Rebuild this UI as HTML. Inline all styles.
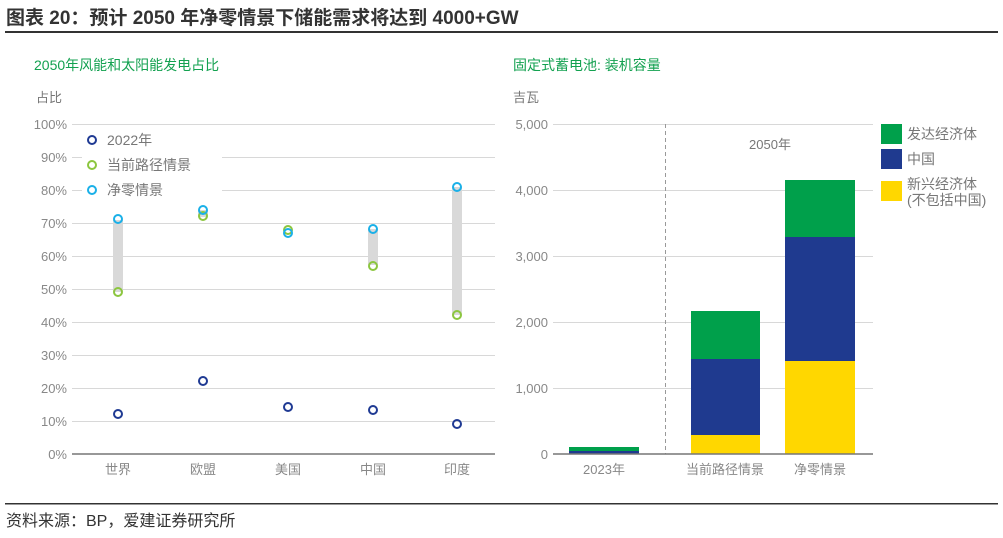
<!DOCTYPE html>
<html><head><meta charset="utf-8"><style>
body{margin:0;background:#fff;width:1003px;height:533px;overflow:hidden;font-family:"Liberation Sans","Noto Sans CJK SC",sans-serif}
</style></head><body>
<svg width="1003" height="533" viewBox="0 0 1003 533" xmlns="http://www.w3.org/2000/svg" font-family="Liberation Sans, Noto Sans CJK SC, sans-serif">
<text x="6" y="24" font-size="19" font-weight="bold" fill="#333">图表 20：预计 2050 年净零情景下储能需求将达到 4000+GW</text>
<rect x="5" y="31" width="993" height="2" fill="#333"/>
<text x="34" y="70" font-size="14" fill="#13a150">2050年风能和太阳能发电占比</text>
<text x="36" y="102" font-size="13" fill="#777">占比</text>
<g stroke="#d8d8d8" stroke-width="1">
<line x1="72" y1="124.5" x2="495" y2="124.5"/><line x1="72" y1="157.5" x2="495" y2="157.5"/><line x1="72" y1="190.5" x2="495" y2="190.5"/><line x1="72" y1="223.5" x2="495" y2="223.5"/><line x1="72" y1="256.5" x2="495" y2="256.5"/><line x1="72" y1="289.5" x2="495" y2="289.5"/><line x1="72" y1="322.5" x2="495" y2="322.5"/><line x1="72" y1="355.5" x2="495" y2="355.5"/><line x1="72" y1="388.5" x2="495" y2="388.5"/><line x1="72" y1="421.5" x2="495" y2="421.5"/>
</g>
<line x1="72" y1="454" x2="495" y2="454" stroke="#777" stroke-width="1.5"/>
<g font-size="13" fill="#888" text-anchor="end">
<text x="67" y="129">100%</text><text x="67" y="162">90%</text><text x="67" y="195">80%</text><text x="67" y="228">70%</text><text x="67" y="261">60%</text><text x="67" y="294">50%</text><text x="67" y="327">40%</text><text x="67" y="360">30%</text><text x="67" y="393">20%</text><text x="67" y="426">10%</text><text x="67" y="459">0%</text>
</g>
<rect x="82" y="130" width="140" height="72" fill="#fff"/>
<g fill="none" stroke-width="2">
<circle cx="92" cy="140" r="4" stroke="#1f3a93"/><circle cx="92" cy="165" r="4" stroke="#8cc63f"/><circle cx="92" cy="190" r="4" stroke="#1ab0e8"/>
</g>
<g font-size="14" fill="#777"><text x="107" y="145">2022年</text><text x="107" y="170">当前路径情景</text><text x="107" y="195">净零情景</text></g>
<g fill="#d9d9d9">
<rect x="113" y="220" width="10" height="72"/><rect x="198" y="210" width="10" height="7"/><rect x="368" y="229" width="10" height="36"/><rect x="452" y="187" width="10" height="128"/>
</g>
<g fill="none" stroke-width="2">
<g stroke="#1f3a93"><circle cx="118" cy="414" r="4"/><circle cx="203" cy="381" r="4"/><circle cx="288" cy="407" r="4"/><circle cx="373" cy="410" r="4"/><circle cx="457" cy="424" r="4"/></g>
<g stroke="#8cc63f"><circle cx="118" cy="292" r="4"/><circle cx="203" cy="216" r="4"/><circle cx="288" cy="230" r="4"/><circle cx="373" cy="266" r="4"/><circle cx="457" cy="315" r="4"/></g>
<g stroke="#1ab0e8"><circle cx="118" cy="219" r="4"/><circle cx="203" cy="210" r="4"/><circle cx="288" cy="233" r="4"/><circle cx="373" cy="229" r="4"/><circle cx="457" cy="187" r="4"/></g>
</g>
<g font-size="13" fill="#888" text-anchor="middle"><text x="118" y="474">世界</text><text x="203" y="474">欧盟</text><text x="288" y="474">美国</text><text x="373" y="474">中国</text><text x="457" y="474">印度</text></g>

<text x="513" y="70" font-size="14" fill="#13a150">固定式蓄电池: 装机容量</text>
<text x="513" y="102" font-size="13" fill="#777">吉瓦</text>
<g stroke="#d8d8d8"><line x1="553" y1="124.5" x2="873" y2="124.5"/><line x1="553" y1="190.5" x2="873" y2="190.5"/><line x1="553" y1="256.5" x2="873" y2="256.5"/><line x1="553" y1="322.5" x2="873" y2="322.5"/><line x1="553" y1="388.5" x2="873" y2="388.5"/></g>
<g font-size="13" fill="#888" text-anchor="end"><text x="548" y="129">5,000</text><text x="548" y="195">4,000</text><text x="548" y="261">3,000</text><text x="548" y="327">2,000</text><text x="548" y="393">1,000</text><text x="548" y="459">0</text></g>
<line x1="665.5" y1="124" x2="665.5" y2="454" stroke="#999" stroke-dasharray="4,3"/>
<text x="770" y="149" font-size="13" fill="#777" text-anchor="middle">2050年</text>
<rect x="569" y="447" width="70" height="7" fill="#00a04b"/><rect x="569" y="451" width="70" height="3" fill="#1f3a8f"/>
<rect x="691" y="311" width="69" height="48" fill="#00a04b"/><rect x="691" y="359" width="69" height="76" fill="#1f3a8f"/><rect x="691" y="435" width="69" height="19" fill="#ffd700"/>
<rect x="785" y="180" width="70" height="57" fill="#00a04b"/><rect x="785" y="237" width="70" height="124" fill="#1f3a8f"/><rect x="785" y="361" width="70" height="93" fill="#ffd700"/>
<line x1="553" y1="454" x2="873" y2="454" stroke="#777" stroke-width="1.5"/>
<g font-size="13" fill="#888" text-anchor="middle"><text x="604" y="474">2023年</text><text x="725" y="474">当前路径情景</text><text x="820" y="474">净零情景</text></g>
<rect x="881" y="124" width="21" height="20" fill="#00a04b"/><rect x="881" y="149" width="21" height="20" fill="#1f3a8f"/><rect x="881" y="181" width="21" height="20" fill="#ffd700"/>
<g font-size="14" fill="#777"><text x="907" y="139">发达经济体</text><text x="907" y="164">中国</text><text x="907" y="189">新兴经济体</text><text x="907" y="205">(不包括中国)</text></g>

<rect x="5" y="503" width="993" height="1.5" fill="#333"/>
<text x="6" y="526" font-size="16" fill="#333">资料来源：BP，爱建证券研究所</text>
</svg>
</body></html>
